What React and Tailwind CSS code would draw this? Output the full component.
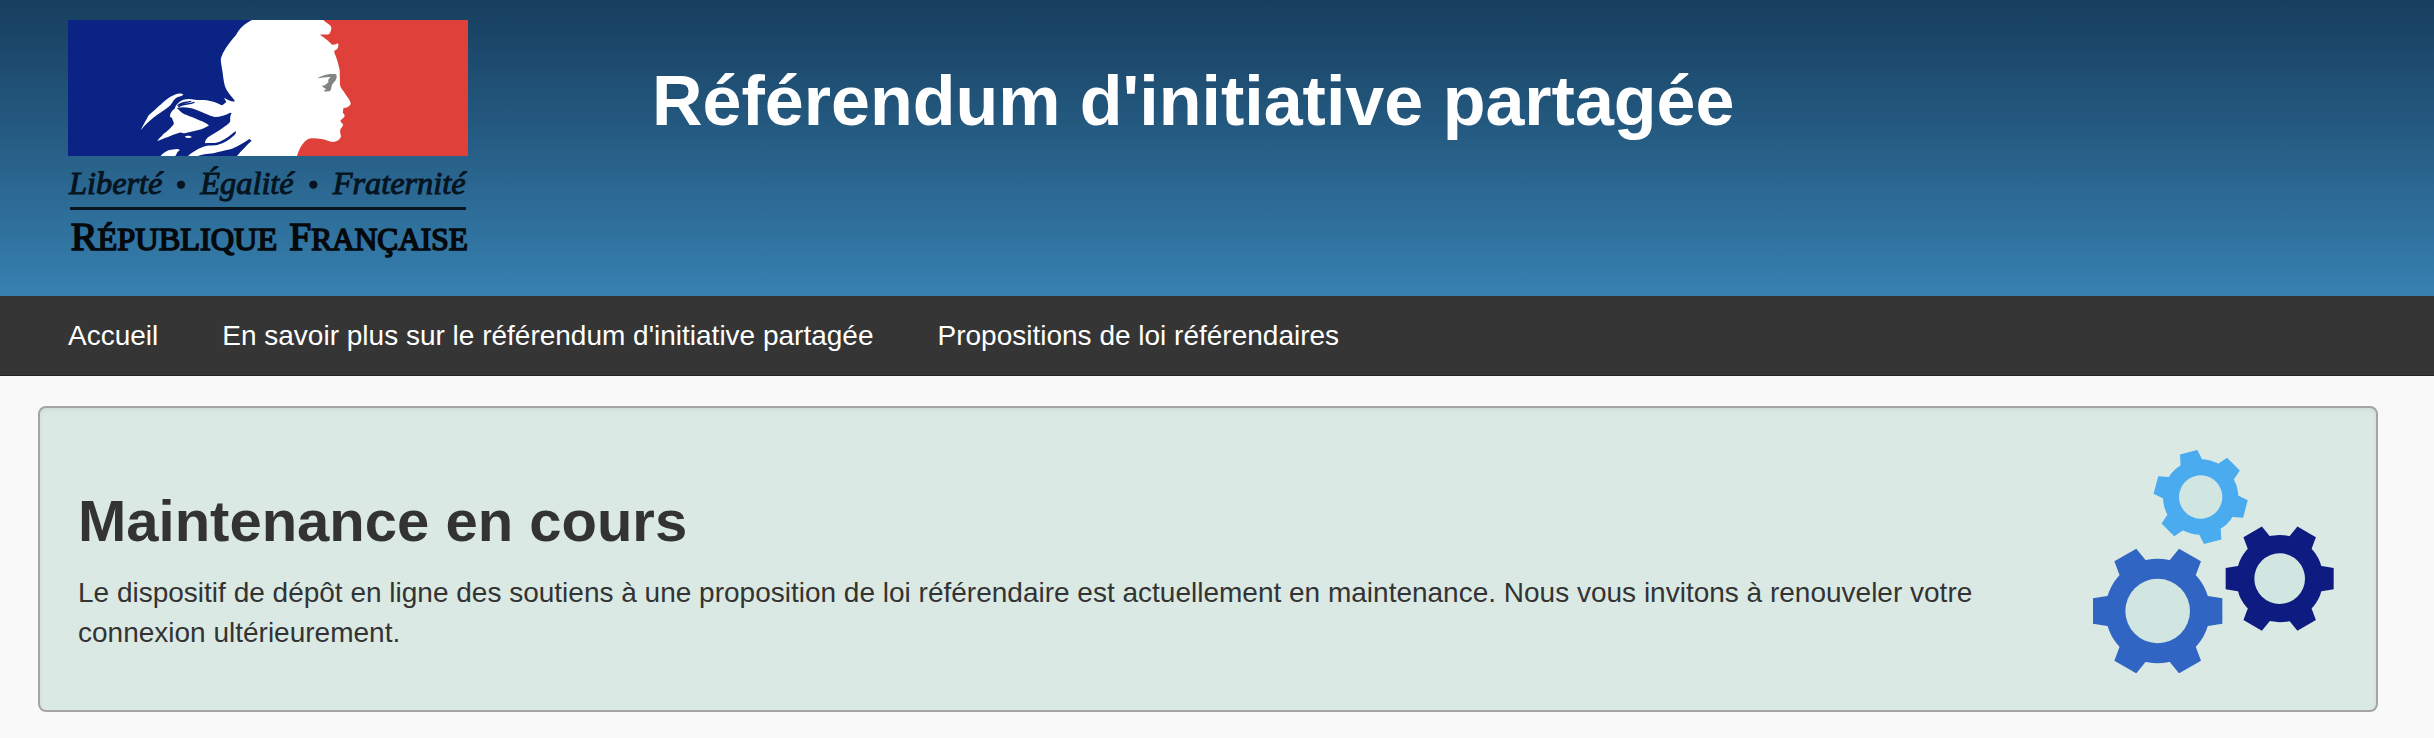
const navLinks = [
  "Accueil",
  "En savoir plus sur le référendum d'initiative partagée",
  "Propositions de loi référendaires",
];

function Logo() {
  return (
    <svg
      viewBox="54 60 1200 711"
      className="block w-[400px] shrink-0 overflow-visible"
      role="img"
      aria-label="Liberté, Égalité, Fraternité - République Française"
    >
      <rect x="54" y="60" width="700" height="408" fill="#0b2385" />
      <rect x="700" y="60" width="554" height="408" fill="#df4039" />
      <path
        fill="#fff"
        d="M606 60 C590 68 574 80 566 92 C560 100 557 108 550 114 C534 134 519 154 513 174 C511 184 515 198 517 212 C521 240 522 254 530 270 C538 284 550 294 555 304 C546 306 538 302 530 298 L522 293 L529 306 L517 316 C508 314 500 306 480 303 C464 298 450 302 434 299 C414 295 398 298 388 306 C378 314 376 320 374 326 C362 334 360 344 360 350 L366 354 C368 362 374 368 370 374 C358 388 348 396 340 402 C334 410 326 416 322 423 C334 420 342 414 352 412 C364 406 376 402 388 398 C394 396 398 400 404 400 C420 396 440 392 454 388 C464 384 472 380 477 376 C466 366 450 362 438 356 C420 348 404 344 396 338 C388 332 384 326 380 324 C400 320 420 322 440 330 C460 338 478 348 494 351 C510 350 528 346 540 338 L545 340 C538 350 542 358 540 366 C534 374 526 378 518 384 C504 394 488 402 474 412 C466 420 464 426 466 430 C480 428 498 432 512 424 C530 416 544 404 556 394 C560 398 556 404 550 408 C538 420 522 430 504 434 C490 438 474 434 460 440 C440 448 424 458 414 468 L444 468 C460 460 480 462 496 458 C520 452 530 450 546 446 C566 438 584 426 598 417 L605 422 C590 436 574 452 561 468 L741 468 C746 452 754 432 770 420 C784 412 800 416 814 417 C826 418 836 426 850 426 C862 424 870 418 873 410 C872 400 868 394 872 386 C876 382 880 378 879 372 C874 368 870 364 872 360 C878 356 884 352 884 346 C882 342 876 338 879 334 C880 330 878 326 882 324 C890 324 898 320 902 312 C902 300 892 292 886 282 C880 272 872 266 870 256 L869 210 C866 196 862 180 857 168 C854 160 850 154 856 150 C864 148 867 138 864 130 C858 132 852 136 846 134 C838 124 824 114 810 104 C820 102 830 106 838 102 C842 94 848 84 840 76 C834 70 826 66 820 60 Z"
      />
      <path
        fill="#fff"
        d="M272 391 C280 374 288 362 296 346 C310 334 322 322 334 312 C346 300 358 290 374 284 C384 280 394 279 400 284 C392 290 380 290 374 298 C366 306 366 314 356 320 C346 328 334 336 322 344 C306 356 290 368 272 391Z"
      />
      <path
        fill="#fff"
        d="M332 468 C338 460 348 454 358 450 C370 450 380 444 390 450 C380 456 382 460 376 468Z M404 410 C410 406 420 407 426 411 C420 415 410 415 404 410Z"
      />
      <path
        fill="none"
        stroke="#0b2385"
        strokeWidth="4"
        strokeLinecap="round"
        d="M386 320 C398 310 416 314 432 307 M384 316 C396 306 410 308 422 304"
      />
      <path
        fill="#7f8582"
        d="M802 235 C816 228 832 219 858 223 C862 228 860 236 856 242 C850 248 844 254 844 264 C842 272 838 277 834 273 C830 276 824 276 821 271 L830 268 C824 266 818 262 815 256 C824 260 828 252 836 246 C832 240 838 234 842 231 C828 230 816 234 802 235Z"
      />
      <g
        className="[font-family:'Liberation_Serif',serif]"
        fontStyle="italic"
        fontSize="97"
        fill="#06141f"
        stroke="#06141f"
        strokeWidth="3"
      >
        <text x="57" y="583">Liberté</text>
        <text x="451" y="583">Égalité</text>
        <text x="848" y="583">Fraternité</text>
        <circle cx="393" cy="554" r="11" />
        <circle cx="790" cy="554" r="11" />
      </g>
      <rect x="60" y="621" width="1188" height="9" fill="#06141f" />
      <g
        className="[font-family:'Liberation_Serif',serif]"
        fontSize="97"
        fill="#05090c"
        stroke="#05090c"
        strokeWidth="5"
      >
        <text x="62" y="750">
          <tspan fontSize="121">R</tspan>ÉPUBLIQUE
        </text>
        <text x="718" y="750" fontSize="94">
          <tspan fontSize="118">F</tspan>RANÇAISE
        </text>
      </g>
    </svg>
  );
}

const teeth = [0, 60, 120, 180, 240, 300];

function Gear({ cx, cy, hole, body, base, baseHalf, tip, tipHalf, angle, color }) {
  return (
    <g transform={`translate(${cx} ${cy}) rotate(${angle})`}>
      <g fill={color}>
        <circle r={body} />
        {teeth.map((t) => (
          <polygon
            key={t}
            transform={`rotate(${t})`}
            points={`0,${-baseHalf} ${base},${-baseHalf} ${tip},${-tipHalf} ${tip},${tipHalf} ${base},${baseHalf} 0,${baseHalf}`}
          />
        ))}
      </g>
      <circle r={hole} fill="#d1e6e1" />
    </g>
  );
}

function Gears() {
  return (
    <svg viewBox="98 179 723 669" className="block w-[241px] shrink-0" aria-hidden="true">
      <Gear cx={421} cy={320} hole={65} body={113} base={109} baseHalf={33} tip={139} tipHalf={27} angle={15} color="#4aabef" />
      <Gear cx={292} cy={662} hole={97} body={157} base={151} baseHalf={45} tip={194} tipHalf={38} angle={0} color="#3165c3" />
      <Gear cx={658} cy={565} hole={76} body={131} base={126} baseHalf={38} tip={162} tipHalf={32} angle={0} color="#0e1b80" />
    </svg>
  );
}

export default function App() {
  return (
    <div className="min-h-screen bg-[#f9f9f9] text-[28px] leading-10 text-[#333] [font-family:'Liberation_Sans',Arial,sans-serif]">
      <header className="flex items-start bg-linear-to-b from-[#173e5e] to-[#3781b1] px-[68px] pt-5 pb-[39px]">
        <Logo />
        <h1 className="ml-[184px] pt-10 text-[70px] leading-[82px] font-bold text-white">
          Référendum d'initiative partagée
        </h1>
      </header>
      <nav className="border-b border-[#222] bg-[#353535] px-9">
        <ul className="flex">
          {navLinks.map((label) => (
            <li key={label}>
              <a href="#" className="block px-8 pt-5 pb-[19px] text-white">
                {label}
              </a>
            </li>
          ))}
        </ul>
      </nav>
      <main className="pt-[30px] pr-14 pb-[26px] pl-[38px]">
        <section className="flex items-center rounded-lg border-2 border-[#a5a5a5] bg-[#dae9e3] pt-[42px] pr-[42px] pb-[37px] pl-[38px] shadow-[inset_0_2px_4px_rgba(0,0,0,0.05)]">
          <div className="flex-1 pt-5 pr-20">
            <h2 className="mb-[22px] text-[58px] leading-[60px] font-bold">Maintenance en cours</h2>
            <p>
              Le dispositif de dépôt en ligne des soutiens à une proposition de loi référendaire est
              actuellement en maintenance. Nous vous invitons à renouveler votre connexion
              ultérieurement.
            </p>
          </div>
          <Gears />
        </section>
      </main>
    </div>
  );
}
